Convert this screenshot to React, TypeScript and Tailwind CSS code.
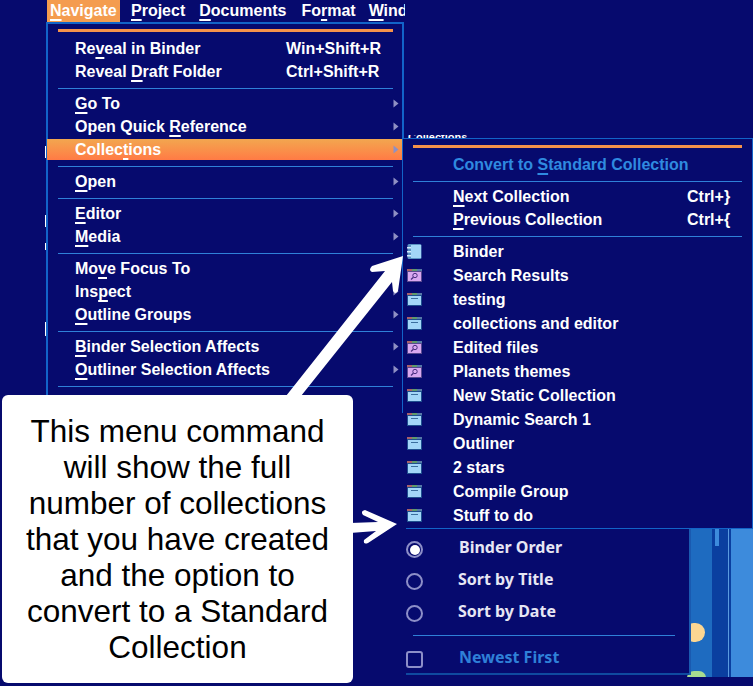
import { FC, ReactNode } from "react";

type Label = [string, string, string] | [string];

interface MenuRow {
  label: Label;
  shortcut?: string;
  arrow?: boolean;
  active?: boolean;
}

const MenuText: FC<{ label: Label }> = ({ label }) => (
  <span className="whitespace-pre">
    {label[0]}
    {label.length === 3 && (
      <>
        <span className="underline decoration-2 underline-offset-[3px] [text-decoration-skip-ink:none]">{label[1]}</span>
        {label[2]}
      </>
    )}
  </span>
);

const Separator: FC = () => (
  <div className="h-[9px] pt-[5px]">
    <div className="h-px bg-[#2f80d8]" />
  </div>
);

const Row: FC<{ row: MenuRow }> = ({ row }) => (
  <div className="relative flex h-[23px] items-center">
    {row.active && (
      <div className="absolute left-[-11px] right-[-10px] top-px bottom-px bg-gradient-to-b from-[#f2a64f] to-[#ff7a45]" />
    )}
    <div className="relative flex w-full items-center pl-[17px]">
      <MenuText label={row.label} />
      {row.shortcut && <span className="absolute left-[228px]">{row.shortcut}</span>}
      {row.arrow && (
        <svg className="absolute right-[-6px]" width="6" height="9" viewBox="0 0 6 9">
          <path d="M0.5 0.5 L5.5 4.5 L0.5 8.5 Z" fill="#8f90c4" />
        </svg>
      )}
    </div>
  </div>
);

const WindowIcon: FC = () => (
  <svg width="15" height="13" viewBox="0 0 15 13">
    <rect x="0" y="0" width="15" height="13" fill="#1f4f8f" />
    <rect x="0" y="0" width="5" height="2" fill="#a8606a" />
    <rect x="5" y="0" width="5" height="2" fill="#5f9a6a" />
    <rect x="10" y="0" width="5" height="2" fill="#5578a8" />
    <rect x="1" y="3" width="13" height="9" fill="#a3d6f8" />
    <rect x="4" y="5" width="7" height="1" fill="#3b6e9e" />
  </svg>
);

const SearchIcon: FC = () => (
  <svg width="15" height="13" viewBox="0 0 15 13">
    <rect x="0" y="0" width="15" height="13" fill="#5a4a90" />
    <rect x="0" y="0" width="5" height="2" fill="#a8606a" />
    <rect x="5" y="0" width="5" height="2" fill="#5f9a6a" />
    <rect x="10" y="0" width="5" height="2" fill="#5578a8" />
    <rect x="1" y="3" width="13" height="9" fill="#d9a8f0" />
    <circle cx="8" cy="6.5" r="2.2" fill="none" stroke="#4a2f80" strokeWidth="1" />
    <path d="M6.4 8.2 L4 10.5" stroke="#4a2f80" strokeWidth="1.2" />
  </svg>
);

const BinderIcon: FC = () => (
  <svg width="15" height="15" viewBox="0 0 15 15">
    <rect x="0.5" y="0" width="14" height="15" rx="1.5" fill="#5a93c4" />
    <rect x="4" y="1" width="10" height="13" fill="#a3d6f8" />
    <rect x="0" y="3" width="4" height="1.5" fill="#d5ecfb" />
    <rect x="0" y="7" width="4" height="1.5" fill="#d5ecfb" />
    <rect x="0" y="11" width="4" height="1.5" fill="#d5ecfb" />
  </svg>
);

const navigateGroups: MenuRow[][] = [
  [
    { label: ["Re", "v", "eal in Binder"], shortcut: "Win+Shift+R" },
    { label: ["Reveal ", "D", "raft Folder"], shortcut: "Ctrl+Shift+R" },
  ],
  [
    { label: ["", "G", "o To"], arrow: true },
    { label: ["Open Quick ", "R", "eference"], arrow: true },
    { label: ["Collec", "t", "ions"], arrow: true, active: true },
  ],
  [{ label: ["", "O", "pen"], arrow: true }],
  [
    { label: ["", "E", "ditor"], arrow: true },
    { label: ["", "M", "edia"], arrow: true },
  ],
  [
    { label: ["Mo", "v", "e Focus To"] },
    { label: ["Ins", "p", "ect"], arrow: true },
    { label: ["", "O", "utline Groups"], arrow: true },
  ],
  [
    { label: ["", "B", "inder Selection Affects"], arrow: true },
    { label: ["", "O", "utliner Selection Affects"], arrow: true },
  ],
];

const collections: { name: string; icon: ReactNode }[] = [
  { name: "Search Results", icon: <SearchIcon /> },
  { name: "testing", icon: <WindowIcon /> },
  { name: "collections and editor", icon: <WindowIcon /> },
  { name: "Edited files", icon: <SearchIcon /> },
  { name: "Planets themes", icon: <SearchIcon /> },
  { name: "New Static Collection", icon: <WindowIcon /> },
  { name: "Dynamic Search 1", icon: <WindowIcon /> },
  { name: "Outliner", icon: <WindowIcon /> },
  { name: "2 stars", icon: <WindowIcon /> },
  { name: "Compile Group", icon: <WindowIcon /> },
  { name: "Stuff to do", icon: <WindowIcon /> },
];

const Radio: FC<{ checked?: boolean }> = ({ checked }) => (
  <div className="mt-[6px] flex h-[17px] w-[17px] items-center justify-center rounded-full border-2 border-[#8d8fc8]">
    {checked && <div className="h-[10px] w-[10px] rounded-full bg-white" />}
  </div>
);

const App: FC = () => {
  return (
    <div className="relative h-[686px] w-[753px] overflow-hidden bg-[#060a6e] font-['Liberation_Sans',Arial,sans-serif] text-[16px] font-bold text-white">
      {/* menu bar */}
      <div className="flex h-[22px] w-[405px] items-center overflow-hidden whitespace-nowrap pl-[47px]">
        <div className="flex h-full w-[73px] shrink-0 items-center bg-[#f49c4f] pl-[3px]">
          <MenuText label={["", "N", "avigate"]} />
        </div>
        <div className="ml-[11px] shrink-0"><MenuText label={["", "P", "roject"]} /></div>
        <div className="ml-[14px] shrink-0"><MenuText label={["", "D", "ocuments"]} /></div>
        <div className="ml-[15px] shrink-0"><MenuText label={["Fo", "r", "mat"]} /></div>
        <div className="ml-[13px] shrink-0"><MenuText label={["", "W", "indow"]} /></div>
      </div>

      {/* specks of the window behind the menu */}
      <div className="absolute left-[45px] top-[146px] h-[12px] w-px bg-white" />
      <div className="absolute left-[45px] top-[215px] h-[12px] w-px bg-white" />
      <div className="absolute left-[45px] top-[243px] h-[7px] w-px bg-white" />
      <div className="absolute left-[45px] top-[322px] h-[14px] w-px bg-white" />

      {/* Navigate menu */}
      <div className="absolute left-[46px] top-[22px] h-[392px] w-[358px] border-2 border-b-0 border-[#1264c8] pl-[10px] pr-[9px] pt-[5px]">
        <div className="h-[8px]">
          <div className="h-[3px] bg-[#f5924a]" />
        </div>
        {navigateGroups.map((group, i) => (
          <div key={i}>
            {group.map((row, j) => (
              <Row key={j} row={row} />
            ))}
            <Separator />
          </div>
        ))}
      </div>

      {/* right-hand window behind the sort menu */}
      <div className="absolute left-[684px] top-[528px] flex h-[149px] w-[69px] overflow-hidden pl-[6px]">
        <div className="relative w-[22px] bg-[#1e6bc0]">
          <div className="absolute left-[-6px] top-[95px] h-[19px] w-[21px] rounded-full bg-[#fbd692]" />
          <div className="absolute left-[-3px] top-[143px] h-[14px] w-[19px] rounded-full bg-[#a8dc90]" />
        </div>
        <div className="relative w-[19px] bg-[#0a3fa0]">
          <div className="absolute left-[3px] top-0 h-[18px] w-[4px] bg-[#3d8bdc]" />
          <div className="absolute right-[2px] top-0 h-full w-px bg-[#5a9be0]" />
        </div>
        <div className="flex-1 bg-[#3d8bdc]" />
      </div>

      {/* sort menu, mostly hidden by the submenu */}
      <div className="absolute left-[406px] top-[528px] h-[147px] w-[285px] border-r-2 border-[#1a5ab0] bg-[#060a6e] font-['Noto_Sans',sans-serif] font-bold text-[#e6e6f4]">
        <div className="flex h-[32px] items-center pt-[5px]">
          <Radio checked />
          <span className="ml-[36px]">Binder Order</span>
        </div>
        <div className="flex h-[32px] items-center pt-[5px]">
          <Radio />
          <span className="ml-[35px]">Sort by Title</span>
        </div>
        <div className="flex h-[32px] items-center pt-[5px]">
          <Radio />
          <span className="ml-[35px]">Sort by Date</span>
        </div>
        <div className="ml-[7px] mt-[11px] h-px w-[262px] bg-[#2f80d8]" />
        <div className="mt-[9px] flex items-center">
          <div className="mt-[4px] h-[17px] w-[17px] rounded-[3px] border-2 border-[#8d8fc8]" />
          <span className="ml-[36px] text-[#2f80d8]">Newest First</span>
        </div>
        <div className="absolute bottom-0 left-0 h-[2px] w-full bg-[#0f4aa0]" />
      </div>

      {/* cut-off label above the submenu */}
      <div className="absolute left-[408px] top-[135px] h-[3px] overflow-hidden text-[11px] leading-[10px]">
        <div className="-translate-y-[3px]">Collections</div>
      </div>

      {/* Collections submenu */}
      <div className="absolute left-[402px] top-[138px] h-[391px] w-[351px] border-r border-t border-[#1264c8] bg-[#060a6e] pl-[11px] pr-[10px] pt-[6px]">
        <div className="absolute left-0 top-0 h-[274px] w-px bg-[#1264c8]" />
        <div className="absolute bottom-0 left-[4px] right-0 h-px bg-[#1264c8]" />
        <div className="h-[8px]">
          <div className="h-[3px] bg-[#f5924a]" />
        </div>
        <div className="flex h-[23px] items-center pl-[40px] text-[#2f8ae0]">
          <MenuText label={["Convert to ", "S", "tandard Collection"]} />
        </div>
        <Separator />
        <div className="relative flex h-[23px] items-center pl-[40px]">
          <MenuText label={["", "N", "ext Collection"]} />
          <span className="absolute left-[274px]">Ctrl+&#125;</span>
        </div>
        <div className="relative flex h-[23px] items-center pl-[40px]">
          <MenuText label={["", "P", "revious Collection"]} />
          <span className="absolute left-[274px]">Ctrl+&#123;</span>
        </div>
        <Separator />
        <div className="relative flex h-[23px] items-center pl-[40px]">
          <div className="absolute left-[-6px] top-[4px]">
            <BinderIcon />
          </div>
          Binder
        </div>
        {collections.map((item) => (
          <div key={item.name} className="relative flex h-[24px] items-center pl-[40px] pt-[2px]">
            <div className="absolute left-[-6px] top-[6px] flex">{item.icon}</div>
            {item.name}
          </div>
        ))}
      </div>

      {/* callout arrows */}
      <svg className="absolute left-0 top-0" width="753" height="686" viewBox="0 0 753 686">
        <path
          d="M403 256 L372 266 Q368 270 372 272 L385 271 L286 396 L301 396 L392 282 L393 291 Q395 295 398 291 Z"
          fill="#ffffff"
        />
        <path
          d="M397 524 L365 510 Q360 511 363 515 L378 522 L350 523 L350 533 L376 531 L364 540 Q363 545 368 543 Z"
          fill="#ffffff"
        />
      </svg>

      {/* callout */}
      <div className="absolute left-[2px] top-[395px] flex h-[288px] w-[351px] items-center justify-center rounded-[6px] bg-white text-center text-[31.5px] font-normal leading-[36px] text-black">
        <div>
          This menu command
          <br />
          will show the full
          <br />
          number of collections
          <br />
          that you have created
          <br />
          and the option to
          <br />
          convert to a Standard
          <br />
          Collection
        </div>
      </div>
    </div>
  );
};

export default App;
